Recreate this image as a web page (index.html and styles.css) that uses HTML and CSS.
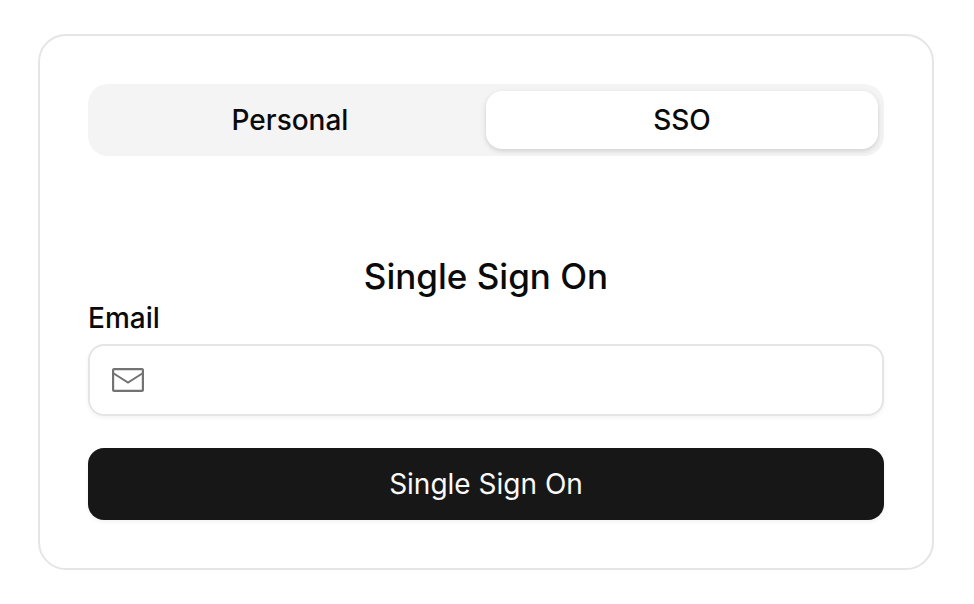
FILE: index.html
```html
<!DOCTYPE html>
<html lang="en">
<head>
  <meta charset="UTF-8">
  <meta name="viewport" content="width=device-width, initial-scale=1.0">
  <title>Single Sign On</title>
  <link rel="stylesheet" href="styles.css">
</head>
<body>

  <main class="card">
    <!-- Login method switch -->
    <div class="tabs" role="tablist">
      <button type="button" class="tab" role="tab" aria-selected="false">Personal</button>
      <button type="button" class="tab active" role="tab" aria-selected="true">SSO</button>
    </div>

    <form class="sso-form">
      <h1>Single Sign On</h1>
      <label for="email">Email</label>
      <div class="input-box">
        <svg class="mail-icon" viewBox="0 0 32 32" fill="none" stroke="currentColor" stroke-width="2.2" aria-hidden="true">
          <rect x="1.1" y="5.1" width="29.8" height="21.8" rx="1"/>
          <path d="M1 9l15 9.500L31 9" stroke-width="2"/>
        </svg>
        <input type="email" id="email" name="email">
      </div>
      <button type="submit" class="submit">Single Sign On</button>
    </form>
  </main>

</body>
</html>
```

FILE: styles.css
```css
* {
  box-sizing: border-box;
}
body {
  margin: 34px 40px 34px 38px;
  background-color: #fff;
  color: #0a0a0a;
  font-family: Inter, sans-serif;
  font-size: 28px;
  font-weight: 500;
}
button, input {
  font: inherit;
  color: inherit;
}
button {
  border: none;
  cursor: pointer;
}
.card {
  padding: 48px;
  border: 2px solid #e5e5e5;
  border-radius: 28px;
}
.tabs {
  display: flex;
  height: 72px;
  padding: 7px 6px;
  background-color: #f4f4f4;
  border-radius: 20px;
}
.tab {
  flex: 1;
  padding: 0;
  background: none;
  border-radius: 16px;
}
.tab.active {
  background-color: #fff;
  box-shadow: 0 2px 6px rgba(0, 0, 0, 0.1), 0 2px 4px rgba(0, 0, 0, 0.06);
}
.sso-form {
  display: flex;
  flex-direction: column;
  margin-top: 96px;
}
h1 {
  margin: 0;
  font-size: 35px;
  font-weight: 500;
  line-height: 48px;
  text-align: center;
}
label {
  line-height: 36px;
}
.input-box {
  display: flex;
  align-items: center;
  height: 72px;
  margin-top: 8px;
  padding: 0 22px;
  border: 2px solid #e5e5e5;
  border-radius: 16px;
  box-shadow: 0 2px 4px rgba(0, 0, 0, 0.05);
}
.input-box input {
  flex: 1;
  min-width: 0;
  padding: 0 16px;
  border: none;
  outline: none;
  background: none;
}
.mail-icon {
  width: 32px;
  height: 32px;
  color: #737373;
}
.submit {
  height: 72px;
  margin-top: 32px;
  background-color: #171717;
  border-radius: 16px;
  box-shadow: 0 2px 4px rgba(0, 0, 0, 0.05);
  color: #fafafa;
  font-weight: 400;
}
```
